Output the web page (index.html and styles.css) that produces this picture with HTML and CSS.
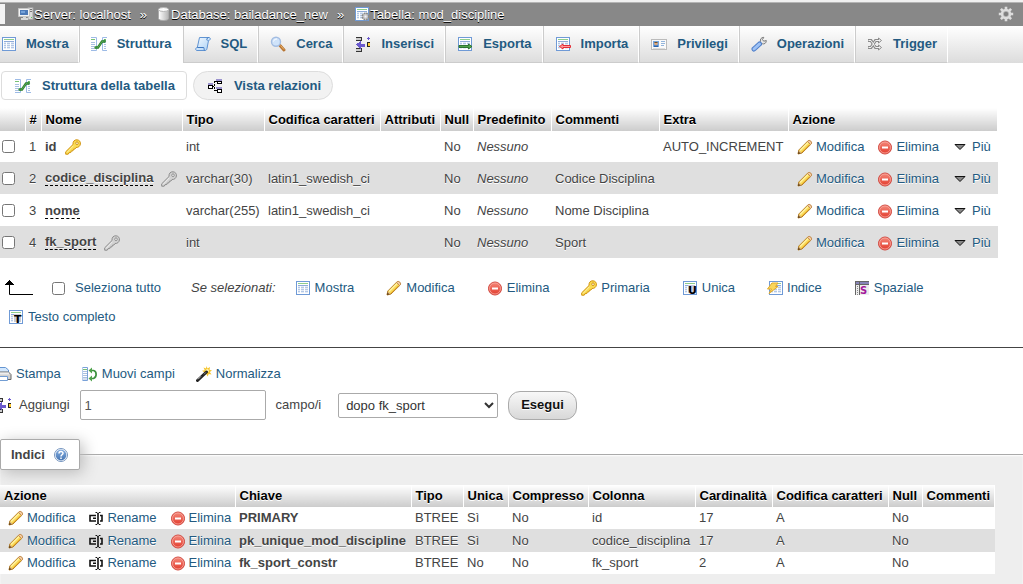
FILE: index.html
```html
<!DOCTYPE html>
<html lang="it">
<head>
<meta charset="utf-8">
<title>mod_discipline - Struttura</title>
<link rel="stylesheet" href="styles.css">
</head>
<body>
<svg class="sprite" aria-hidden="true">
  <defs>
    <linearGradient id="g-red" x1="0" y1="0" x2="0" y2="1"><stop offset="0" stop-color="#f58a7c"/><stop offset="1" stop-color="#e23a2c"/></linearGradient>
    <linearGradient id="g-db" x1="0" y1="0" x2="1" y2="0"><stop offset="0" stop-color="#fff"/><stop offset="1" stop-color="#b5b5b5"/></linearGradient>
    <linearGradient id="g-help" x1="0" y1="0" x2="0" y2="1"><stop offset="0" stop-color="#86aee0"/><stop offset="1" stop-color="#4676b4"/></linearGradient>
    <linearGradient id="g-scroll" x1="0" y1="0" x2="1" y2="1"><stop offset="0" stop-color="#f4faff"/><stop offset="1" stop-color="#a9d0f5"/></linearGradient>
  </defs>
  <symbol id="i-table" viewBox="0 0 16 16">
    <rect x="2.500" y="1.500" width="13" height="13" fill="#fff" stroke="#6f9ad6"/>
    <path d="M4 3.500h10" stroke="#8fce8b"/>
    <path d="M4 5h10v8H4z" fill="#b4c8e6"/>
    <path d="M4 6.500h10M4 8.500h10M4 10.500h10M4 12.500h10" stroke="#fff" stroke-opacity=".65"/>
    <path d="M6.500 5v8M10.500 5v8" stroke="#fff"/>
    <path d="M4 5.500h10" stroke="#8eabd9"/>
  </symbol>
  <symbol id="i-tableops" viewBox="0 0 16 16">
    <use href="#i-table" x="-1"/>
    <circle cx="11.500" cy="10.500" r="3" fill="#aaa" stroke="#8a8a8a" stroke-width="2" stroke-dasharray="1.600 .8"/>
    <circle cx="11.500" cy="10.500" r="2.400" fill="#ccc"/><circle cx="11.500" cy="10.500" r="1" fill="#eef"/>
  </symbol>
  <symbol id="i-server" viewBox="0 0 16 16">
    <path d="M10 1.500h5v12h-5z" fill="#dcdcdc" stroke="#a2a2a2"/><path d="M11 3.500h3M11 5.500h3" stroke="#777"/><path d="M13 11h1v1h-1z" fill="#5c5"/>
    <path d="M.5 2.500h11v8H.5z" fill="#f3f3f3" stroke="#c4c4c4"/><path d="M2 4h8v5H2z" fill="#4d7ab8"/><path d="M3 5h4v2H3z" fill="#75a2d9"/>
    <path d="M5 11h3v1h2v2H3v-2h2z" fill="#d8d8d8"/>
  </symbol>
  <symbol id="i-db" viewBox="0 0 16 16">
    <path d="M1.500 3.500v9c0 1.300 2.300 2 5 2s5-.7 5-2v-9z" fill="url(#g-db)" stroke="#aaa"/>
    <ellipse cx="6.500" cy="3.500" rx="5" ry="2" fill="#fbfbfb" stroke="#b5b5b5"/>
  </symbol>
  <symbol id="i-gear" viewBox="0 0 16 16">
    <g stroke="#ddd" stroke-width="2.600"><path d="M8 .8v14.400M.8 8h14.400M2.900 2.900l10.200 10.200M13.100 2.900L2.900 13.100"/></g>
    <circle cx="8" cy="8" r="5.200" fill="#ddd"/><circle cx="8" cy="8" r="3" fill="#b5b5b5"/><circle cx="8" cy="8" r="2.200" fill="#808080"/>
  </symbol>
  <symbol id="i-struct" viewBox="0 0 16 16">
    <path d="M0 1.500h5.500v13H0M16 1.500h-4.500v13H16" fill="#fff" stroke="#9dbbe6"/>
    <path d="M0 3.500h4M13 3.500h2" stroke="#79c274"/><path d="M0 6.500h4M0 8.500h4M0 10.500h4M0 12.500h4M13 6.500h2M13 8.500h2M13 10.500h2M13 12.500h2" stroke="#a9c0e2"/>
    <path d="M5 11.500h2l4-6h3" fill="none" stroke="#2f7d32" stroke-width="2.400"/><path d="M5 11.500h2l4-6h3" fill="none" stroke="#58ad52"/>
    <circle cx="5" cy="11.500" r="1.600" fill="#3d9140"/><circle cx="13.500" cy="5" r="1.600" fill="#3d9140"/>
  </symbol>
  <symbol id="i-sql" viewBox="0 0 16 16">
    <path d="M4.500 1.500H14c2 0 1.500 3-.5 3l-1.500 8c-.3 1.500-1 2-2 2H2c-2 0-1.600-3 .3-3z" fill="url(#g-scroll)" stroke="#5f93d2"/>
    <path d="M12.500 4.500c-1 0-1-2.500 1-3M2.300 11.500h6.500c.5 1.500.2 2.600 1 3" fill="none" stroke="#3f78c0"/>
  </symbol>
  <symbol id="i-search" viewBox="0 0 16 16">
    <path d="M10 9.500l4 4.500" stroke="#b87532" stroke-width="3" stroke-linecap="round"/><path d="M10.500 9.500l3.500 4" stroke="#edb66e"/>
    <circle cx="6" cy="5.800" r="4.500" fill="#cfe3fa" stroke="#a3bde2" stroke-width="1.400"/><path d="M3.500 5.500C4 3.500 5.500 3 7 3" fill="none" stroke="#fff"/>
  </symbol>
  <symbol id="i-insert" viewBox="0 0 16 16">
    <g shape-rendering="crispEdges"><path d="M1 1.500h5.500v3H1M1 15.500h5.500v-3H1" fill="#ccc" stroke="#333"/>
    <path d="M1 8.500l5-4v3h4v3H6v3z" fill="#6a5acd"/>
    <path d="M15 6.500h-3v4h3" fill="#fc3" stroke="#222"/><path d="M13.500 1v3M12 2.500h3" stroke="#6a5acd"/></g>
  </symbol>
  <symbol id="i-export" viewBox="0 0 16 16"><use href="#i-table" x="-1"/><path d="M2 9.500h9.500V8l3.500 2.500-3.500 2.500v-1.500H2z" fill="#4fa34b" stroke="#246b25" stroke-width=".9"/></symbol>
  <symbol id="i-import" viewBox="0 0 16 16"><use href="#i-table" x="-1"/><path d="M15.500 9.500H8V8l-3.500 2.500L8 13v-1.500h7.500z" fill="#ff9a9a" stroke="#e21e28" stroke-width=".9"/></symbol>
  <symbol id="i-rights" viewBox="0 0 16 16">
    <rect x=".5" y="3.500" width="15" height="10" fill="#fafafa" stroke="#bbb"/><path d="M2 5h6v6H2z" fill="#75a6df"/><path d="M3 11V9.500h4V11z" fill="#2c62a8"/><circle cx="5" cy="7.500" r="1.700" fill="#e3a877"/><path d="M3.500 6.500h3" stroke="#735026"/><path d="M10 5.500h4M10 7.500h4M10 9.500h3" stroke="#93b5dc"/><path d="M2 12.500h12" stroke="#ddd"/>
  </symbol>
  <symbol id="i-wrench" viewBox="0 0 16 16">
    <path d="M7.500 7.500l2-2c-.6-2 .6-4.200 3.300-4.200L11.500 3.500l1.200 1.700 2.600-.7c.2 2.500-2 4-4 3.300L9 10z" fill="#e6e6e6" stroke="#7d7d7d"/>
    <path d="M3 13l5.500-5" stroke="#4f7fca" stroke-width="5" stroke-linecap="round"/><path d="M3 13l5.500-5" stroke="#9ec2f5" stroke-width="3" stroke-linecap="round"/>
  </symbol>
  <symbol id="i-trigger" viewBox="0 0 16 16">
    <path d="M1 4.500h3l4.500 7H13M1 11.500h3l4.500-7H13" fill="none" stroke="#8a8a8a" stroke-width="3"/><path d="M11.500 2l3 2.500-3 2.500zM11.500 9l3 2.500-3 2.500z" fill="#f4f4f4" stroke="#8a8a8a"/><path d="M1.500 4.500H4l4.500 7H13M1.500 11.500H4l4.500-7H13" fill="none" stroke="#f2f2f2"/>
  </symbol>
  <symbol id="i-relations" viewBox="0 0 16 16">
    <g shape-rendering="crispEdges"><path d="M5 8.500h3M7.500 3v10M7.500 3.500h2M7.500 12.500h2" stroke="#000" stroke-dasharray="2 1" fill="none"/><path d="M1.500 7.500h4v3h-4zM10.500 3.500h4v2h-4zM10.500 11.500h4v3h-4z" fill="#fff" stroke="#000"/><path d="M1 5h5v2H1zM9 1h6v2H9zM9 9h6v2H9z" fill="#9b93cf"/></g>
  </symbol>
  <symbol id="i-key" viewBox="0 0 16 16">
    <path d="M8 5.500C7.700 2.500 9.500.6 12 .8c2.500.3 3.700 2 3.400 4.200-.4 2.300-2 3.600-4.400 3.500l-1 1.500-1.500.2-.5 1.600-1.700.2-.5 1.500-1.800.2-.8 1.500H.7v-2.400z" fill="#fadb52" stroke="#d19413"/>
    <path d="M2 13.500l6.500-6.800" stroke="#fff3a8"/><circle cx="12" cy="4.200" r="1.300" fill="#fff" stroke="#d19413"/>
  </symbol>
  <symbol id="i-keygray" viewBox="0 0 16 16">
    <path d="M8 5.500C7.700 2.500 9.500.6 12 .8c2.500.3 3.700 2 3.400 4.200-.4 2.300-2 3.600-4.400 3.500l-1 1.500-1.500.2-.5 1.600-1.700.2-.5 1.500-1.800.2-.8 1.500H.7v-2.400z" fill="#d2d2d2" stroke="#8d8d8d"/>
    <path d="M2 13.500l6.500-6.800" stroke="#f1f1f1"/><circle cx="12" cy="4.200" r="1.300" fill="#fff" stroke="#8d8d8d"/>
  </symbol>
  <symbol id="i-pencil" viewBox="0 0 16 16">
    <path d="M1 15l.8-4L11 1.800c1.500-1 4.400 1.500 3.200 3.200L5 14z" fill="#fada57" stroke="#b67b22"/>
    <path d="M3 11.500l8-8" stroke="#fff2a4" stroke-width="1.500"/><path d="M5 13.200l7.500-7.500" stroke="#e5a82c"/>
    <path d="M10.500 2.300l1-.8c1.500-.6 3.600 1.400 3 3l-1 1z" fill="#f6cfa6" stroke="#c38b51"/><path d="M1 15l.7-3.300L4.500 14z" fill="#5a3a16"/><path d="M1.900 11.600l2.500 2.300-1 .4-1.700-1.600z" fill="#edc796"/>
  </symbol>
  <symbol id="i-drop" viewBox="0 0 16 16">
    <circle cx="8" cy="8.500" r="6.500" fill="url(#g-red)" stroke="#d0453c"/><circle cx="8" cy="8.500" r="5.500" fill="none" stroke="#f8aaa0" stroke-width=".8"/><path d="M5 7.500h6v2H5z" fill="#fff"/>
  </symbol>
  <symbol id="i-more" viewBox="0 0 16 16"><path d="M3 5.500h10L8 10.500z" fill="#888" stroke="#111"/></symbol>
  <symbol id="i-help" viewBox="0 0 16 16">
    <circle cx="8" cy="8" r="6.500" fill="#fff" stroke="#7595bf"/><circle cx="8" cy="8" r="5.400" fill="url(#g-help)"/>
    <path d="M6 6.500c0-2.500 4-2.500 4-.2C10 7.800 8 7.800 8 9.500M8 10.500V12" fill="none" stroke="#fff" stroke-width="1.500"/>
  </symbol>
  <symbol id="i-rename" viewBox="0 0 16 16">
    <path d="M8 5.500H2v5.500h6M5 8.200h3M12 5.500h2V11h-2" fill="none" stroke="#111" stroke-width="1.600"/><path d="M7.500 2.500H9l1 1 1-1h1.500M7.500 14.500H9l1-1 1 1h1.500" fill="none" stroke="#111"/><path d="M10 3v11" stroke="#111" stroke-width="1.600"/>
  </symbol>
  <symbol id="i-print" viewBox="0 0 16 16">
    <path d="M3.500 7V1.500h6l3 2.500v3" fill="#d2e7fd" stroke="#6495d1"/><path d="M1.500 7.500l2-1.500h9l2.500 2.500v5h-13z" fill="#d0d0d0" stroke="#686868"/><path d="M3 7.500h10" stroke="#eee" stroke-width="2"/><path d="M2.500 10.500h9v4h-9z" fill="#fff" stroke="#729dd3"/>
  </symbol>
  <symbol id="i-move" viewBox="0 0 16 16">
    <path d="M0 1.500h5.500v13H0" fill="#fff" stroke="#79a1d8"/><path d="M.5 1v14" stroke="#b5cceb"/><path d="M1 3.500h4" stroke="#78c070"/><path d="M1 5.500h4M1 7.500h4M1 9.500h4M1 11.500h4M1 13h4" stroke="#aac0df"/>
    <path d="M8 4.500h3.500c3.500.5 3.500 7 0 8H8" fill="none" stroke="#3d9140" stroke-width="1.700"/><path d="M10 1.500v6l-3.500-3zM10 9.500v6l-3.500-3z" fill="#4fa34b"/>
  </symbol>
  <symbol id="i-wand" viewBox="0 0 16 16">
    <path d="M10.500 0l1 2.500L14 1l-.5 2.700 2.500.8-2.200 1.500 1.700 2.500-2.800-.5-1 2.500-1.500-2.500-3 .8 1.400-2.300L6 4.800l2.800-.5L7.500 1.500l2.500 1z" fill="#f6c52c"/><circle cx="11.300" cy="4.800" r="1.700" fill="#fff3b0"/>
    <path d="M1.500 14.500l9-8.500" stroke="#222" stroke-width="3" stroke-linecap="round"/><path d="M2 13.300l3-3" stroke="#bbb"/><path d="M8 8.300l2-2" stroke="#888"/>
  </symbol>
  <symbol id="i-index" viewBox="0 0 16 16"><use href="#i-table"/><path d="M5 3h6L8.500 6.500H11L2 13.500 4.500 9H.5z" fill="#fbd65a" stroke="#e0a92c"/></symbol>
</svg>

<header class="crumbs">
  <button class="nav-toggle" type="button" aria-label="Pannello"></button>
  <nav class="crumb-list" aria-label="Percorso">
    <svg class="icon"><use href="#i-server"/></svg><a href="#">Server: localhost</a>
    <span class="sep">»</span>
    <svg class="icon icon-db" viewBox="0 0 14 16"><use href="#i-db" width="16" height="16"/></svg><a href="#">Database: bailadance_new</a>
    <span class="sep">»</span>
    <svg class="icon"><use href="#i-tableops"/></svg><a href="#">Tabella: mod_discipline</a>
  </nav>
  <button class="gear" type="button" aria-label="Impostazioni"><svg class="icon"><use href="#i-gear"/></svg></button>
</header>

<nav class="tabs" aria-label="Schede">
  <a class="tab first" href="#"><svg class="icon"><use href="#i-table"/></svg>Mostra</a>
  <a class="tab active" href="#"><svg class="icon"><use href="#i-struct"/></svg>Struttura</a>
  <a class="tab" href="#"><svg class="icon"><use href="#i-sql"/></svg>SQL</a>
  <a class="tab" href="#"><svg class="icon"><use href="#i-search"/></svg>Cerca</a>
  <a class="tab" href="#"><svg class="icon"><use href="#i-insert"/></svg>Inserisci</a>
  <a class="tab" href="#"><svg class="icon"><use href="#i-export"/></svg>Esporta</a>
  <a class="tab" href="#"><svg class="icon"><use href="#i-import"/></svg>Importa</a>
  <a class="tab" href="#"><svg class="icon"><use href="#i-rights"/></svg>Privilegi</a>
  <a class="tab" href="#"><svg class="icon"><use href="#i-wrench"/></svg>Operazioni</a>
  <a class="tab" href="#"><svg class="icon"><use href="#i-trigger"/></svg>Trigger</a>
</nav>

<main>
  <nav class="subtabs" aria-label="Viste">
    <a class="subtab current" href="#"><svg class="icon"><use href="#i-struct"/></svg>Struttura della tabella</a>
    <a class="subtab" href="#"><svg class="icon"><use href="#i-relations"/></svg>Vista relazioni</a>
  </nav>

  <table class="grid columns">
    <colgroup><col class="w-check"><col class="w-num"><col class="w-name"><col class="w-type"><col class="w-coll"><col class="w-attr"><col class="w-null"><col class="w-def"><col class="w-comm"><col class="w-extra"><col class="w-act"></colgroup>
    <thead><tr><th></th><th>#</th><th>Nome</th><th>Tipo</th><th>Codifica caratteri</th><th>Attributi</th><th>Null</th><th>Predefinito</th><th>Commenti</th><th>Extra</th><th>Azione</th></tr></thead>
    <tbody>
      <tr><td class="check"><input type="checkbox" id="c1" aria-label="id"></td><td>1</td><td><label for="c1">id</label><svg class="icon key"><use href="#i-key"/></svg></td><td>int</td><td></td><td></td><td>No</td><td><i>Nessuno</i></td><td></td><td>AUTO_INCREMENT</td>
        <td><div class="acts"><a href="#"><svg class="icon"><use href="#i-pencil"/></svg>Modifica</a><a href="#"><svg class="icon"><use href="#i-drop"/></svg>Elimina</a><a class="more" href="#"><svg class="icon"><use href="#i-more"/></svg>Più</a></div></td></tr>
      <tr><td class="check"><input type="checkbox" id="c2" aria-label="codice_disciplina"></td><td>2</td><td><label class="noted" for="c2">codice_disciplina</label><svg class="icon key"><use href="#i-keygray"/></svg></td><td>varchar(30)</td><td>latin1_swedish_ci</td><td></td><td>No</td><td><i>Nessuno</i></td><td>Codice Disciplina</td><td></td>
        <td><div class="acts"><a href="#"><svg class="icon"><use href="#i-pencil"/></svg>Modifica</a><a href="#"><svg class="icon"><use href="#i-drop"/></svg>Elimina</a><a class="more" href="#"><svg class="icon"><use href="#i-more"/></svg>Più</a></div></td></tr>
      <tr><td class="check"><input type="checkbox" id="c3" aria-label="nome"></td><td>3</td><td><label class="noted" for="c3">nome</label></td><td>varchar(255)</td><td>latin1_swedish_ci</td><td></td><td>No</td><td><i>Nessuno</i></td><td>Nome Disciplina</td><td></td>
        <td><div class="acts"><a href="#"><svg class="icon"><use href="#i-pencil"/></svg>Modifica</a><a href="#"><svg class="icon"><use href="#i-drop"/></svg>Elimina</a><a class="more" href="#"><svg class="icon"><use href="#i-more"/></svg>Più</a></div></td></tr>
      <tr><td class="check"><input type="checkbox" id="c4" aria-label="fk_sport"></td><td>4</td><td><label class="noted" for="c4">fk_sport</label><svg class="icon key"><use href="#i-keygray"/></svg></td><td>int</td><td></td><td></td><td>No</td><td><i>Nessuno</i></td><td>Sport</td><td></td>
        <td><div class="acts"><a href="#"><svg class="icon"><use href="#i-pencil"/></svg>Modifica</a><a href="#"><svg class="icon"><use href="#i-drop"/></svg>Elimina</a><a class="more" href="#"><svg class="icon"><use href="#i-more"/></svg>Più</a></div></td></tr>
    </tbody>
  </table>

  <div class="bulk">
    <div class="bulk-all">
      <svg class="arrow" viewBox="0 0 28 16"><path d="M4.500 2v12.500H28" fill="none" stroke="#000"/><path d="M0 5h9v-1H8V3H7V2H6V1H5V0H4v1H3v1H2v1H1v1H0z"/></svg>
      <input type="checkbox" id="all"><label for="all">Seleziona tutto</label>
    </div>
    <i class="with">Se selezionati:</i>
    <button type="button"><svg class="icon"><use href="#i-table" x="-1"/></svg>Mostra</button>
    <button type="button"><svg class="icon"><use href="#i-pencil"/></svg>Modifica</button>
    <button type="button"><svg class="icon"><use href="#i-drop"/></svg>Elimina</button>
    <button type="button"><svg class="icon"><use href="#i-key"/></svg>Primaria</button>
    <button type="button"><svg class="icon" viewBox="0 0 16 16" aria-hidden="true"><use href="#i-table" x="-1" width="16" height="16"/><path d="M6 5h7v8H6z" fill="#c3cbe0"/><text class="glyph" x="6" y="14">U</text></svg>Unica</button>
    <button type="button"><svg class="icon"><use href="#i-index"/></svg>Indice</button>
    <button type="button"><svg class="icon" viewBox="0 0 16 16" aria-hidden="true"><g shape-rendering="crispEdges"><path d="M1 1h14v14H1z" fill="#eee"/><path d="M1 1h14v3H1z" fill="#8784b8"/><path d="M1.500 1v14M1 4.500h14M1 1.500h14M5.500 1v14" stroke="#666"/><path d="M3.500 6v9" stroke="#888" stroke-dasharray="1 1"/></g><text class="glyph glyph-s" x="6" y="14">S</text></svg>Spaziale</button>
    <button type="button"><svg class="icon" viewBox="0 0 16 16" aria-hidden="true"><use href="#i-table" x="-1" width="16" height="16"/><path d="M6 5h7v8H6z" fill="#c8cbd3"/><text class="glyph" x="6" y="14">T</text></svg>Testo completo</button>
  </div>

  <hr>

  <div class="tools">
    <a href="#"><svg class="icon"><use href="#i-print"/></svg>Stampa</a>
    <a href="#"><svg class="icon"><use href="#i-move"/></svg>Muovi campi</a>
    <a href="#"><svg class="icon"><use href="#i-wand"/></svg>Normalizza</a>
  </div>

  <form class="add">
    <svg class="icon"><use href="#i-insert"/></svg>
    <label class="add-label" for="n">Aggiungi</label>
    <input class="num" type="text" id="n" value="1">
    <label class="unit" for="pos">campo/i</label>
    <select id="pos"><option>dopo fk_sport</option></select>
    <button class="go" type="button">Esegui</button>
  </form>

  <fieldset>
    <legend>Indici<svg class="icon"><use href="#i-help"/></svg></legend>
    <table class="grid indexes">
      <colgroup><col class="x-act"><col class="x-key"><col class="x-type"><col class="x-uni"><col class="x-comp"><col class="x-col"><col class="x-card"><col class="x-coll"><col class="x-null"><col class="x-comm"></colgroup>
      <thead><tr><th>Azione</th><th>Chiave</th><th>Tipo</th><th>Unica</th><th>Compresso</th><th>Colonna</th><th>Cardinalità</th><th>Codifica caratteri</th><th>Null</th><th>Commenti</th></tr></thead>
      <tbody>
        <tr><td><div class="acts"><a href="#"><svg class="icon"><use href="#i-pencil"/></svg>Modifica</a><a href="#"><svg class="icon"><use href="#i-rename"/></svg>Rename</a><a href="#"><svg class="icon"><use href="#i-drop"/></svg>Elimina</a></div></td><td><b>PRIMARY</b></td><td>BTREE</td><td>Sì</td><td>No</td><td>id</td><td>17</td><td>A</td><td>No</td><td></td></tr>
        <tr><td><div class="acts"><a href="#"><svg class="icon"><use href="#i-pencil"/></svg>Modifica</a><a href="#"><svg class="icon"><use href="#i-rename"/></svg>Rename</a><a href="#"><svg class="icon"><use href="#i-drop"/></svg>Elimina</a></div></td><td><b>pk_unique_mod_discipline</b></td><td>BTREE</td><td>Sì</td><td>No</td><td>codice_disciplina</td><td>17</td><td>A</td><td>No</td><td></td></tr>
        <tr><td><div class="acts"><a href="#"><svg class="icon"><use href="#i-pencil"/></svg>Modifica</a><a href="#"><svg class="icon"><use href="#i-rename"/></svg>Rename</a><a href="#"><svg class="icon"><use href="#i-drop"/></svg>Elimina</a></div></td><td><b>fk_sport_constr</b></td><td>BTREE</td><td>No</td><td>No</td><td>fk_sport</td><td>2</td><td>A</td><td>No</td><td></td></tr>
      </tbody>
    </table>
  </fieldset>
</main>
</body>
</html>
```

FILE: styles.css
```css
* { box-sizing: border-box; }
html, body { height: 100%; }
body {
  margin: 0;
  display: flex;
  flex-direction: column;
  overflow-x: hidden;
  background: #fff;
  color: #444;
  font: 13px/16px "Liberation Sans", Arial, sans-serif;
}
a { color: #235a81; text-decoration: none; }
button, input, select { font: inherit; margin: 0; }
.sprite { position: absolute; width: 0; height: 0; }
.icon { width: 16px; height: 16px; flex: none; display: block; }
.glyph { font: bold 11px "DejaVu Sans", sans-serif; fill: #000; }
.glyph-s { font-size: 10px; fill: #a3199b; }

/* breadcrumb bar */
.crumbs {
  display: flex;
  align-items: center;
  flex: none;
  height: 26px;
  border-top: 2px solid #f0f0f0;
  background: #888;
  box-shadow: inset 0 1px #b4b4b4;
}
.nav-toggle { width: 5px; height: 20px; padding: 0; border: 0; background: #f3f3f3; }
.crumb-list { display: flex; align-items: center; flex: 1; padding: 2px 0 0 13px; }
.crumb-list .icon { margin-top: -2px; }
.crumb-list .icon-db { width: 14px; }
.crumb-list a, .sep { color: #fff; text-shadow: 0 1px 0 #000; }
.sep { padding: 0 10px 0 9px; }
.gear { padding: 0; margin-right: 9px; border: 0; background: none; }

/* main tabs */
.tabs {
  display: flex;
  flex: none;
  height: 37px;
  background: linear-gradient(#fff, #dcdcdc);
}
.tab {
  display: flex;
  align-items: center;
  gap: 10px;
  padding: 0 10px 1px 11px;
  border-left: 1px solid #ccc;
  border-right: 1px solid #fff;
  border-bottom: 1px solid #ccc;
  font-weight: bold;
}
.tab.first { padding-left: 0; padding-right: 9px; border-left: 0; }
.tab.active { background: #fff; border-bottom-color: #fff; }

main { display: flex; flex-direction: column; flex: 1; }
.subtabs { display: flex; gap: 6px; padding: 8px 1px; }
.subtab {
  display: flex;
  align-items: center;
  gap: 11px;
  height: 29px;
  padding: 0 11px 0 13px;
  border: 1px solid #ddd;
  border-radius: 20px;
  background: #f2f2f2;
  font-weight: bold;
}
.subtab.current { border-radius: 4px; background: #fff; }

/* data grids */
.grid { table-layout: fixed; border-collapse: collapse; flex: none; }
.grid th {
  height: 23px;
  padding: 0 0 0 4px;
  border-right: 1px solid #fff;
  background: linear-gradient(#fff, #ccc);
  color: #000;
  text-align: left;
  text-shadow: 0 1px 0 #fff;
  white-space: nowrap;
}
.grid td { padding: 0 0 0 4px; white-space: nowrap; text-shadow: 0 1px 0 #fff; }
.grid tbody tr:nth-child(even) { background: #dfdfdf; }
.acts, .acts a { display: flex; align-items: center; }
.acts a { gap: 3px; }
.acts { gap: 13px; padding-left: 4px; }
.acts .more { gap: 4px; }

.columns { width: 998px; }
.columns td { height: 32px; padding-top: 1px; }
.columns tr:first-child td { height: 31px; }
.columns .acts { padding-left: 5px; }
.columns .check { padding: 0 2px; }
.columns input { display: block; width: 13px; height: 13px; }
.columns label { font-weight: bold; }
.columns .noted { border-bottom: 1px dashed #000; }
.key { display: inline-block; vertical-align: middle; margin-left: 8px; }
.w-check { width: 25px; }
.w-num { width: 16px; }
.w-name { width: 141px; }
.w-type { width: 82px; }
.w-coll { width: 116px; }
.w-attr { width: 60px; }
.w-null { width: 33px; }
.w-def { width: 78px; }
.w-comm { width: 108px; }
.w-extra { width: 129px; }

/* bulk actions */
.bulk { display: flex; flex-wrap: wrap; align-items: center; gap: 13px 32px; padding: 22px 8px 22px 5px; }
.bulk-all { display: flex; align-items: center; color: #235a81; }
.arrow { width: 28px; height: 16px; margin-right: 19px; }
.bulk-all input { width: 13px; height: 13px; margin-right: 10px; }
.with { margin: 0 -13px 0 -2px; }
.bulk button { display: flex; align-items: center; gap: 4px; padding: 0; border: 0; background: none; color: #235a81; }
.bulk button:last-child { margin-left: 3px; }
hr { width: 100%; height: 1px; margin: 0; border: 0; background: #444; flex: none; }

/* tools and add form */
.tools { display: flex; gap: 21px; padding-top: 18px; margin-left: -4px; }
.tools a { display: flex; align-items: center; gap: 4px; }
.add { display: flex; align-items: center; padding-top: 8px; margin-left: -4px; }
.add-label { padding: 0 10px 0 7px; }
.num { width: 186px; height: 30px; padding: 0 4px; border: 1px solid #aaa; border-radius: 2px; color: #555; background: #fff; }
.unit { padding: 0 17px 0 10px; }
.add select { width: 160px; height: 25px; padding: 0 3px; border: 1px solid #aaa; border-radius: 2px; color: #333; background: #fff; }
.go {
  height: 29px;
  margin-left: 10px;
  padding: 0 12px;
  border: 1px solid #aaa;
  border-radius: 12px;
  background: linear-gradient(#f8f8f8, #d8d8d8);
  color: #111;
  font-weight: bold;
  text-shadow: 0 1px 0 #fff;
}

/* indexes */
fieldset {
  flex: 1 0 auto;
  min-width: 0;
  margin: 19px 0 0;
  padding: 15px 0 0;
  border: 0;
  border-top: 1px solid #aaa;
  background: #eee;
  box-shadow: inset 0 1px 2px #fff;
}
legend {
  display: flex;
  align-items: center;
  gap: 8px;
  height: 31px;
  padding: 0 10px;
  border: 1px solid #aaa;
  border-radius: 2px;
  background: #fff;
  box-shadow: 3px 3px 15px #bbb;
  font-weight: bold;
}
.indexes { width: 995px; background: #fff; }
.indexes th { height: 22px; }
.indexes td { height: 22px; }
.indexes tr:nth-child(even) td { height: 23px; }
.x-act { width: 235px; }
.x-key { width: 176px; }
.x-type { width: 52px; }
.x-uni { width: 45px; }
.x-comp { width: 80px; }
.x-col { width: 107px; }
.x-card { width: 77px; }
.x-coll { width: 116px; }
.x-null { width: 34px; }
```
